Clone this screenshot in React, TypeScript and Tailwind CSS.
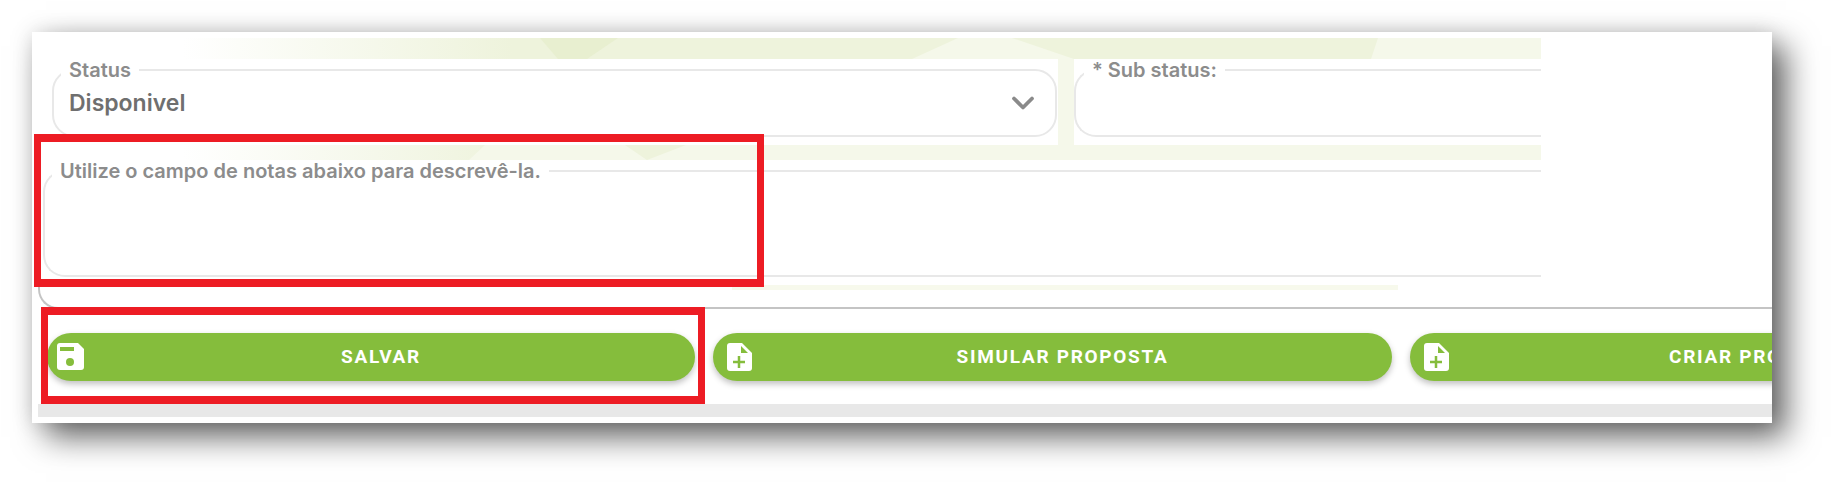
import { ChevronDown } from "lucide-react";

const SaveIcon = () => (
  <svg viewBox="0 0 27 27" className="w-[27px] h-[27px] shrink-0">
    <path
      d="M3 0H21L27 6V24A3 3 0 0 1 24 27H3A3 3 0 0 1 0 24V3A3 3 0 0 1 3 0Z"
      fill="#fff"
    />
    <rect x="3" y="4" width="14" height="4" fill="#85bd3c" />
    <circle cx="13" cy="19" r="4" fill="#85bd3c" />
  </svg>
);

const FilePlusIcon = () => (
  <svg viewBox="0 0 25 28" className="w-[25px] h-[28px] shrink-0">
    <path
      d="M3 0H15L25 10V25A3 3 0 0 1 22 28H3A3 3 0 0 1 0 25V3A3 3 0 0 1 3 0Z"
      fill="#fff"
    />
    <path d="M14 3V10H21Z" fill="#85bd3c" />
    <path d="M12 13V25M6 19H18" stroke="#85bd3c" strokeWidth="2.5" />
  </svg>
);

const ActionButton = ({
  label,
  width,
  icon,
  left,
}: {
  label: string;
  width: string;
  icon: React.ReactNode;
  left: string;
}) => (
  <button
    className={`relative h-12 ${width} shrink-0 rounded-full bg-[#85bd3c] shadow-[0_3px_6px_rgba(0,0,0,0.25)] flex items-center justify-center pl-5 text-white font-bold text-[19px] tracking-[1.7px] font-['Roboto',sans-serif]`}
  >
    <span className={`absolute top-2.5 ${left}`}>{icon}</span>
    {label}
  </button>
);

const Decoration = () => (
  <svg
    viewBox="0 0 1509 260"
    preserveAspectRatio="none"
    className="absolute left-0 top-[6px] w-[1509px] h-[260px]"
  >
    <defs>
      <linearGradient id="fade" gradientUnits="userSpaceOnUse" x1="150" x2="400" y1="0" y2="0">
        <stop offset="0" stopColor="#ffffff" />
        <stop offset="1" stopColor="#f5f8ea" />
      </linearGradient>
      <linearGradient id="fadeDark" gradientUnits="userSpaceOnUse" x1="150" x2="480" y1="0" y2="0">
        <stop offset="0" stopColor="#ffffff" />
        <stop offset="1" stopColor="#eef3dc" />
      </linearGradient>
    </defs>
    <rect width="1509" height="122" fill="url(#fade)" />
    <rect y="247" x="700" width="666" height="5" fill="#f7f9ec" />
    <path d="M150 0H1346L1339 21H150Z" fill="url(#fadeDark)" />
    <path d="M508 0H586L555 21H526Z" fill="#e8efd0" />
    <path d="M926 0H980L1042 21H880Z" fill="#f5f8ea" />
    <path d="M150 107H453L437 122H150Z" fill="url(#fadeDark)" />
    <path d="M593 107H654L615 122Z" fill="#eef3dc" />
  </svg>
);

export default function App() {
  return (
    <div className="relative w-full h-[488px] bg-white pl-8 pt-8 font-['Inter',sans-serif] overflow-hidden">
      <main className="relative w-[1740px] h-[391px] bg-white shadow-[14px_14px_30px_rgba(0,0,0,0.6),0_0_20px_rgba(0,0,0,0.12)]">
        <div className="overflow-hidden w-full h-full flex flex-col">
          <section className="relative w-[1509px] h-[258px] shrink-0">
            <Decoration />
            <div className="relative pt-[27px] flex gap-4">
              <div className="w-[1026px] h-[86px] bg-white pl-5 pr-[1px]">
                <fieldset className="h-[78px] border-2 border-[#e8e8e8] rounded-[22px] pl-[16px] pr-[18px]">
                  <legend className="-ml-[9px] px-2 text-[20px] leading-[22px] font-semibold text-[#8c8c8c]">
                    Status
                  </legend>
                  <div className="flex items-center justify-between h-[44px]">
                    <span className="-ml-px text-[23px] font-semibold text-[#6f6f6f]">
                      Disponivel
                    </span>
                    <ChevronDown
                      size={36}
                      strokeWidth={2.5}
                      className="text-[#8a8a8a] -mr-[4px]"
                    />
                  </div>
                </fieldset>
              </div>
              <div className="w-[467px] h-[86px] bg-white">
                <fieldset className="h-[78px] border-2 border-r-0 border-[#e8e8e8] rounded-l-[22px]">
                  <legend className="ml-[8px] px-2 text-[20px] leading-[22px] font-semibold text-[#8c8c8c]">
                    * Sub status:
                  </legend>
                </fieldset>
              </div>
            </div>
            <div className="relative mt-[15px] h-[125px] bg-white pl-[11px]">
              <fieldset className="h-[117px] border-2 border-r-0 border-[#e8e8e8] rounded-l-[22px]">
                <legend className="ml-[7px] px-2 text-[20px] leading-[22px] font-semibold text-[#8c8c8c]">
                  Utilize o campo de notas abaixo para descrevê-la.
                </legend>
              </fieldset>
            </div>
          </section>
          <div className="ml-[6px] mt-[-10px] h-[29px] shrink-0 border-l-2 border-b-2 border-[#c4c4c4] rounded-bl-[20px]" />
          <div className="ml-[15px] mt-6 flex gap-[18px] shrink-0">
            <ActionButton
              label="SALVAR"
              width="w-[648px]"
              left="left-[10px]"
              icon={<SaveIcon />}
            />
            <ActionButton
              label="SIMULAR PROPOSTA"
              width="w-[679px]"
              left="left-[14px]"
              icon={<FilePlusIcon />}
            />
            <ActionButton
              label="CRIAR PROPOSTA"
              width="w-[680px]"
              left="left-[14px]"
              icon={<FilePlusIcon />}
            />
          </div>
          <div className="ml-[6px] mt-[23px] h-[13px] shrink-0 bg-[#e8e8e8]" />
        </div>
        <div className="absolute left-[2px] top-[102px] w-[730px] h-[153px] border-x-[7px] border-y-[8px] border-[#ed1c24]" />
        <div className="absolute left-[9px] top-[275px] w-[664px] h-[97px] border-x-[7px] border-y-[8px] border-[#ed1c24]" />
      </main>
    </div>
  );
}
